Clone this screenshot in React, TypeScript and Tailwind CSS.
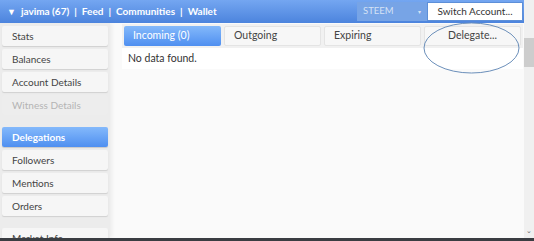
import React from "react";

const menuTop = ["Stats", "Balances", "Account Details"];
const menuMid = ["Followers", "Mentions", "Orders"];

function SideItem({ label, active, disabled }: { label: string; active?: boolean; disabled?: boolean }) {
  let cls = "bg-[#f6f6f6] text-[#444] shadow-[0_1px_1px_rgba(0,0,0,0.12)]";
  if (active) cls = "bg-gradient-to-b from-[#84b9fb] to-[#4f8ff0] text-white font-bold shadow-[0_1px_1px_rgba(0,0,0,0.15)]";
  if (disabled) cls = "bg-[#ededed] text-[#b4b4b4]";
  return (
    <div className={`flex h-[20px] w-[106px] shrink-0 items-center rounded-[2px] px-[10px] text-[10px] ${cls}`}>
      {label}
    </div>
  );
}

export default function App() {
  const tabs = ["Outgoing", "Expiring", "Delegate..."];
  return (
    <div
      className="relative flex h-[241px] w-[534px] overflow-hidden bg-[#fafafa]"
      style={{ fontFamily: 'Lato, "Open Sans", "Liberation Sans", sans-serif' }}
    >
      <div className="flex min-h-0 flex-1 flex-col">
        <header className="flex h-[23px] shrink-0 items-center bg-gradient-to-b from-[#74a6f1] to-[#4c84dd] pl-[7px] pr-[1px] text-[10px] font-bold text-white">
          <span className="mr-[5px] text-[9px]">▼</span>
          <span>javima (67)</span>
          <span className="mx-[5px]">|</span>
          <span>Feed</span>
          <span className="mx-[5px]">|</span>
          <span>Communities</span>
          <span className="mx-[5px]">|</span>
          <span>Wallet</span>
          <div className="ml-auto flex h-[19px] w-[70px] items-center justify-between bg-[#77a4e6] px-[6px] text-[9.5px] font-normal text-[#d5e2f5]">
            <span>STEEM</span>
            <span className="text-[6px]">▾</span>
          </div>
          <div className="flex h-[19px] w-[96px] items-center justify-center border border-[#5d8fd8] bg-white text-[10px] font-normal text-[#333]">
            Switch Account...
          </div>
        </header>
        <div className="flex min-h-0 flex-1 overflow-hidden">
          <aside className="flex w-[110px] shrink-0 flex-col gap-[3px] bg-[#ececec] pl-[2px] pt-[3px] shadow-[2px_0_4px_rgba(0,0,0,0.06)]">
            {menuTop.map((m) => (
              <SideItem key={m} label={m} />
            ))}
            <SideItem label="Witness Details" disabled />
            <div className="mt-[9px]">
              <SideItem label="Delegations" active />
            </div>
            {menuMid.map((m) => (
              <SideItem key={m} label={m} />
            ))}
            <div className="mt-[9px]">
              <SideItem label="Market Info" />
            </div>
          </aside>
          <main className="flex-1 pl-[12px] pr-[1px] pt-[1px]">
            <div className="grid grid-cols-4 gap-[3px] bg-[#f1f1f1] p-[2px] text-[10.5px]">
              <div className="flex h-[20px] items-center rounded-[2px] bg-gradient-to-b from-[#84b9fb] to-[#4f8ff0] px-[9px] text-white">
                Incoming (0)
              </div>
              {tabs.map((t, i) => (
                <div
                  key={t}
                  className={`flex h-[20px] items-center rounded-[2px] border border-[#e4e4e4] bg-[#f7f7f7] text-[#444] ${
                    i === 2 ? "justify-center" : "px-[9px]"
                  }`}
                >
                  {t}
                </div>
              ))}
            </div>
            <div className="flex h-[21px] items-center bg-white px-[6px] text-[10.5px] text-[#333]">No data found.</div>
          </main>
        </div>
        <div className="h-[3px] shrink-0 bg-[#3a3d42]" />
      </div>
      <div className="relative flex w-[10px] flex-col bg-[#f0f0f0]">
        <div className="mt-[38px] h-[29px] w-full bg-[#cdcdcd]" />
        <div className="mt-auto mb-[4px] text-center text-[7px] leading-none text-[#666]">⌄</div>
        <div className="h-[3px] bg-[#3a3d42]" />
      </div>
      <svg className="pointer-events-none absolute left-0 top-0" width="534" height="241">
        <ellipse cx="471.5" cy="48" rx="47.5" ry="25" fill="none" stroke="#6b8fba" strokeWidth="1" />
      </svg>
    </div>
  );
}
